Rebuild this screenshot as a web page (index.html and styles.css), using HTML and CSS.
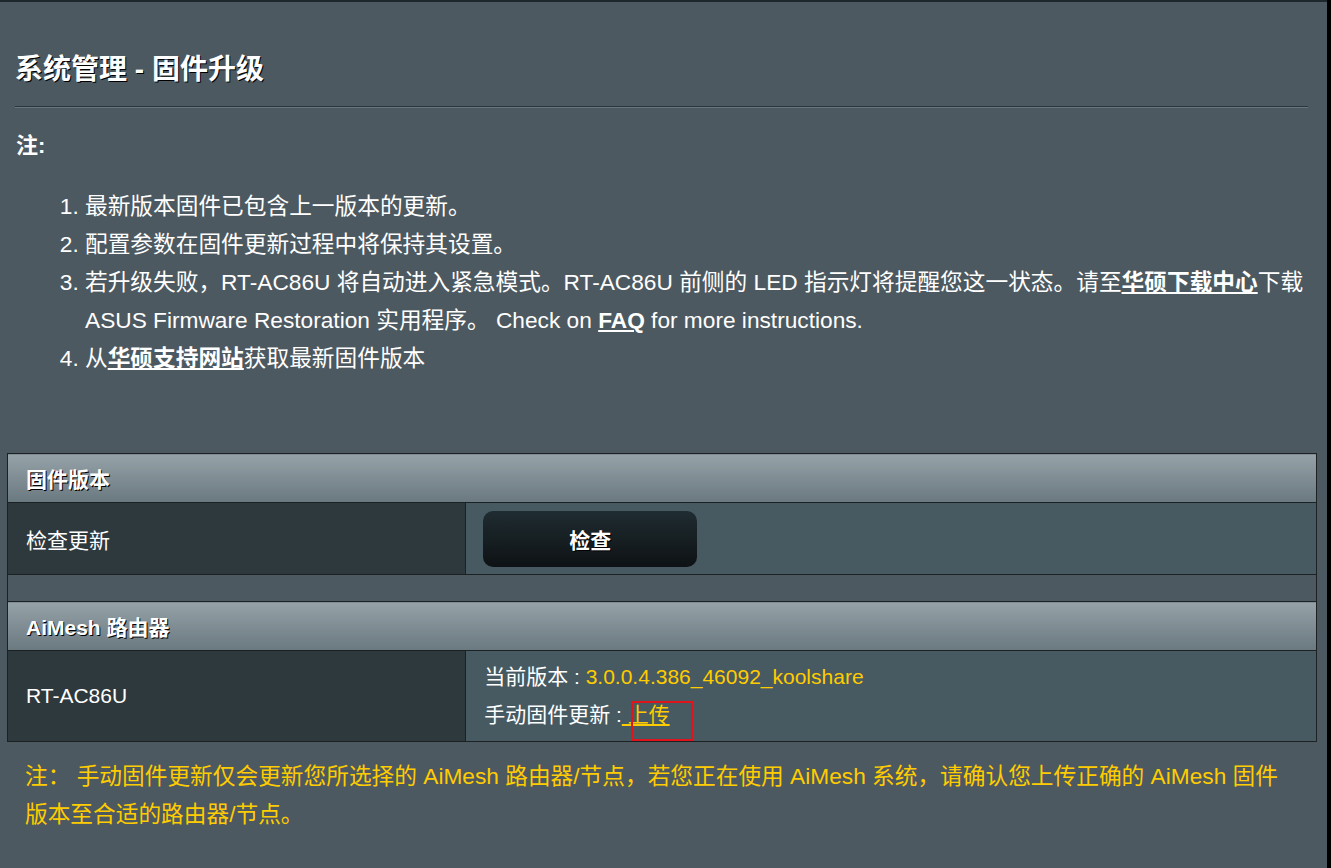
FILE: index.html
```html
<!DOCTYPE html>
<html lang="zh-CN">

<head>
    <meta charset="UTF-8">
    <meta name="viewport" content="width=device-width, initial-scale=1.0">
    <title>系统管理 - 固件升级</title>
    <link rel="stylesheet" href="styles.css">
</head>

<body>
    <div class="page">

        <div class="intro">
            <h1 class="page-title">系统管理 - 固件升级</h1>
            <div class="title-line"></div>
            <p class="note-label">注:</p>
            <ol class="note-list">
                <li>最新版本固件已包含上一版本的更新。</li>
                <li>配置参数在固件更新过程中将保持其设置。</li>
                <li>若升级失败，RT-AC86U 将自动进入紧急模式。RT-AC86U 前侧的 LED 指示灯将提醒您这一状态。请至<a href="#" class="strong-link">华硕下载中心</a>下载 ASUS Firmware Restoration 实用程序。 Check on <a href="#" class="strong-link">FAQ</a> for more instructions.</li>
                <li>从<a href="#" class="strong-link">华硕支持网站</a>获取最新固件版本</li>
            </ol>
        </div>

        <table class="fw-table">
            <tr>
                <th colspan="2" class="group-head">固件版本</th>
            </tr>
            <tr class="row-check">
                <td class="cell-label">检查更新</td>
                <td class="cell-value">
                    <button type="button" class="btn-check">检查</button>
                </td>
            </tr>
            <tr class="row-spacer">
                <td colspan="2"></td>
            </tr>
            <tr>
                <th colspan="2" class="group-head">AiMesh 路由器</th>
            </tr>
            <tr class="row-node">
                <td class="cell-label">RT-AC86U</td>
                <td class="cell-value">
                    <div class="info-line">当前版本 : <span class="version">3.0.0.4.386_46092_koolshare</span></div>
                    <div class="info-line">手动固件更新 :<a href="#" class="upload-link">&nbsp;上传<span class="mark-box"></span></a></div>
                </td>
            </tr>
        </table>

        <p class="aimesh-note">注： 手动固件更新仅会更新您所选择的 AiMesh 路由器/节点，若您正在使用 AiMesh 系统，请确认您上传正确的 AiMesh 固件版本至合适的路由器/节点。</p>

    </div>
</body>

</html>
```

FILE: styles.css
```css
body {
    margin: 0;
    padding: 0;
    background-color: #000;
    font-family: "Liberation Sans", "Noto Sans CJK SC", sans-serif;
    color: #fff;
}

.page {
    width: 1327px;
    height: 866px;
    background-color: #4d5960;
    border-top: 2px solid #1d282d;
    overflow: hidden;
}

.intro {
    padding: 50px 2px 0 15px;
}

.page-title {
    margin: 0;
    font-size: 28px;
    line-height: 36px;
    font-weight: bold;
    text-shadow: 1px 1px 0 #000;
}

.title-line {
    margin: 18px 17px 0 0;
    height: 1px;
    background-color: #2c363b;
    border-bottom: 1px solid #66767d;
}

.note-label {
    margin: 25px 0 0 1px;
    font-size: 22px;
    line-height: 26px;
    font-weight: bold;
}

.note-list {
    margin: 28px 0 0 0;
    padding-left: 70px;
    font-size: 22.7px;
    line-height: 38px;
}

.strong-link {
    color: #fff;
    font-weight: bold;
    text-decoration: underline;
}

/* firmware table */
.fw-table {
    width: 1310px;
    margin: 76px 0 0 7px;
    border-collapse: collapse;
    border: 1px solid #1c2124;
    font-size: 21px;
}

.fw-table td,
.fw-table th {
    border: 1px solid #1c2124;
    padding: 0 18px;
}

.group-head {
    height: 48px;
    text-align: left;
    font-weight: bold;
    background: linear-gradient(to bottom, #95a2a8, #6a787f);
    text-shadow: 1px 1px 0 #000;
}

.cell-label {
    width: 35%;
    background-color: #2e393e;
}

.cell-value {
    background-color: #475a61;
}

.row-check td {
    height: 71px;
}

.row-spacer td {
    height: 26px;
    padding: 0;
    background-color: #4d5960;
}

.row-node td {
    height: 90px;
}

.btn-check {
    display: block;
    width: 214px;
    height: 56px;
    margin-left: -1px;
    border: none;
    border-radius: 10px;
    background: linear-gradient(to bottom, #1f2c31, #0e1214);
    color: #fff;
    font-family: "Liberation Sans", "Noto Sans CJK SC", sans-serif;
    font-size: 21px;
    font-weight: bold;
    text-shadow: 1px 1px 0 #000;
    cursor: pointer;
}

.info-line {
    line-height: 38px;
}

.version {
    color: #ffcc00;
}

.upload-link {
    position: relative;
    color: #ffcc00;
    text-decoration: underline;
}

/* red outline drawn over the upload link */
.mark-box {
    position: absolute;
    left: 9px;
    top: -2px;
    width: 62px;
    height: 40px;
    border: 2px solid #e0141c;
    box-sizing: border-box;
}

.aimesh-note {
    margin: 15px 0 0 0;
    padding: 0 40px 0 25px;
    color: #ffcc00;
    font-size: 22.7px;
    line-height: 38px;
}
```
